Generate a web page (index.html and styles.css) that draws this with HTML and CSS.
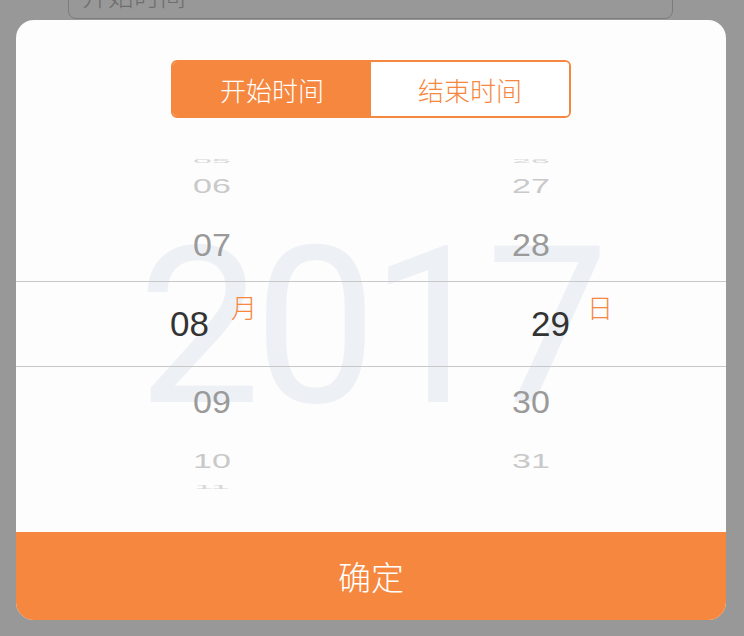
FILE: index.html
```html
<!DOCTYPE html>
<html lang="zh">
<head>
<meta charset="utf-8">
<title>选择时间</title>
<link rel="stylesheet" href="styles.css">
</head>
<body>
<div class="field"><span class="field-text">开始时间</span></div>
<div class="sheet">
  <div class="tabs-wrap">
    <div class="tabs">
      <div class="tab active">开始时间</div>
      <div class="tab">结束时间</div>
    </div>
  </div>
  <div class="picker">
    <div class="year">2017</div>
    <div class="band"></div>
    <div class="wheels">
      <div class="wheel">
        <div class="item r3">05</div>
        <div class="item r2">06</div>
        <div class="item r1">07</div>
        <div class="item sel sel-month"><span class="num">08</span><span class="unit">月</span></div>
        <div class="item r1">09</div>
        <div class="item r2 low">10</div>
        <div class="item r3">11</div>
      </div>
      <div class="wheel">
        <div class="item r3">26</div>
        <div class="item r2">27</div>
        <div class="item r1">28</div>
        <div class="item sel sel-day"><span class="num">29</span><span class="unit">日</span></div>
        <div class="item r1">30</div>
        <div class="item r2 low">31</div>
        <div class="item r3"></div>
      </div>
    </div>
  </div>
  <div class="confirm">确定</div>
</div>
</body>
</html>
```
FILE: styles.css
```css
html, body {
  margin: 0;
  padding: 0;
}
body {
  background: #989898;
  height: 636px;
  overflow: hidden;
  font-family: "Noto Sans CJK SC", "Liberation Sans", sans-serif;
}
.field {
  box-sizing: border-box;
  width: 605px;
  height: 59px;
  margin: -40px 0 0 68px;
  border: 1px solid #7c7c7c;
  border-radius: 8px;
  padding: 21px 0 0 13px;
}
.field-text {
  display: block;
  font-size: 26px;
  line-height: 1;
  color: #6e6e6e;
  font-weight: 300;
}
.sheet {
  width: 710px;
  height: 600px;
  margin: 1px 0 0 16px;
  background: #fdfdfd;
  border-radius: 18px;
  overflow: hidden;
  display: flex;
  flex-direction: column;
}
.tabs-wrap {
  padding-top: 40px;
  display: flex;
  justify-content: center;
}
.tabs {
  box-sizing: border-box;
  width: 400px;
  height: 58px;
  border: 2px solid #f5873f;
  border-radius: 6px;
  overflow: hidden;
  display: flex;
}
.tab {
  flex: 1;
  display: flex;
  align-items: center;
  justify-content: center;
  font-size: 26px;
  font-weight: 300;
  color: #f5873f;
  background: #ffffff;
}
.tab.active {
  background: #f5873f;
  color: #ffffff;
}
.picker {
  position: relative;
  height: 414px;
}
.year {
  position: absolute;
  top: 100px;
  left: -2px;
  right: 0;
  text-align: center;
  font-family: "Roboto", "Liberation Sans", sans-serif;
  font-weight: 400;
  font-size: 219px;
  letter-spacing: -7px;
  line-height: 1;
  color: #edf0f5;
}
.band {
  position: absolute;
  top: 163px;
  left: 0;
  right: 0;
  height: 86px;
  box-sizing: border-box;
  border-top: 1px solid #c8c8c8;
  border-bottom: 1px solid #c8c8c8;
}
.wheels {
  position: relative;
  display: grid;
  grid-template-columns: 322px 316px;
  padding: 32px 0 0 35px;
}
.wheel {
  display: flex;
  flex-direction: column;
}
.item {
  font-family: "Liberation Sans", sans-serif;
  text-align: center;
  font-size: 34px;
}
.r1 {
  height: 90px;
  line-height: 90px;
  color: #9a9a9a;
  transform: scaleY(0.9);
}
.r2 {
  height: 28px;
  line-height: 28px;
  color: #c9c9c9;
  font-size: 34px;
  transform: scaleY(0.58);
}
.r2.low {
  height: 29px;
  line-height: 29px;
}
.r3 {
  height: 22px;
  line-height: 22px;
  color: #d8d8d8;
  transform: scaleY(0.14);
}
.sel {
  height: 67px;
  display: flex;
  text-align: left;
}
.sel-month {
  padding-left: 119px;
  gap: 22px;
}
.sel-day {
  padding-left: 158px;
  gap: 17px;
}
.num {
  font-size: 35px;
  line-height: 67px;
  color: #333333;
}
.unit {
  align-self: flex-start;
  margin-top: 4px;
  font-family: "Noto Sans CJK SC", sans-serif;
  font-size: 26px;
  line-height: 1;
  font-weight: 300;
  color: #f5873f;
}
.confirm {
  height: 88px;
  background: #f5873f;
  color: #ffffff;
  display: flex;
  align-items: center;
  justify-content: center;
  font-size: 33px;
  font-weight: 300;
}
```
